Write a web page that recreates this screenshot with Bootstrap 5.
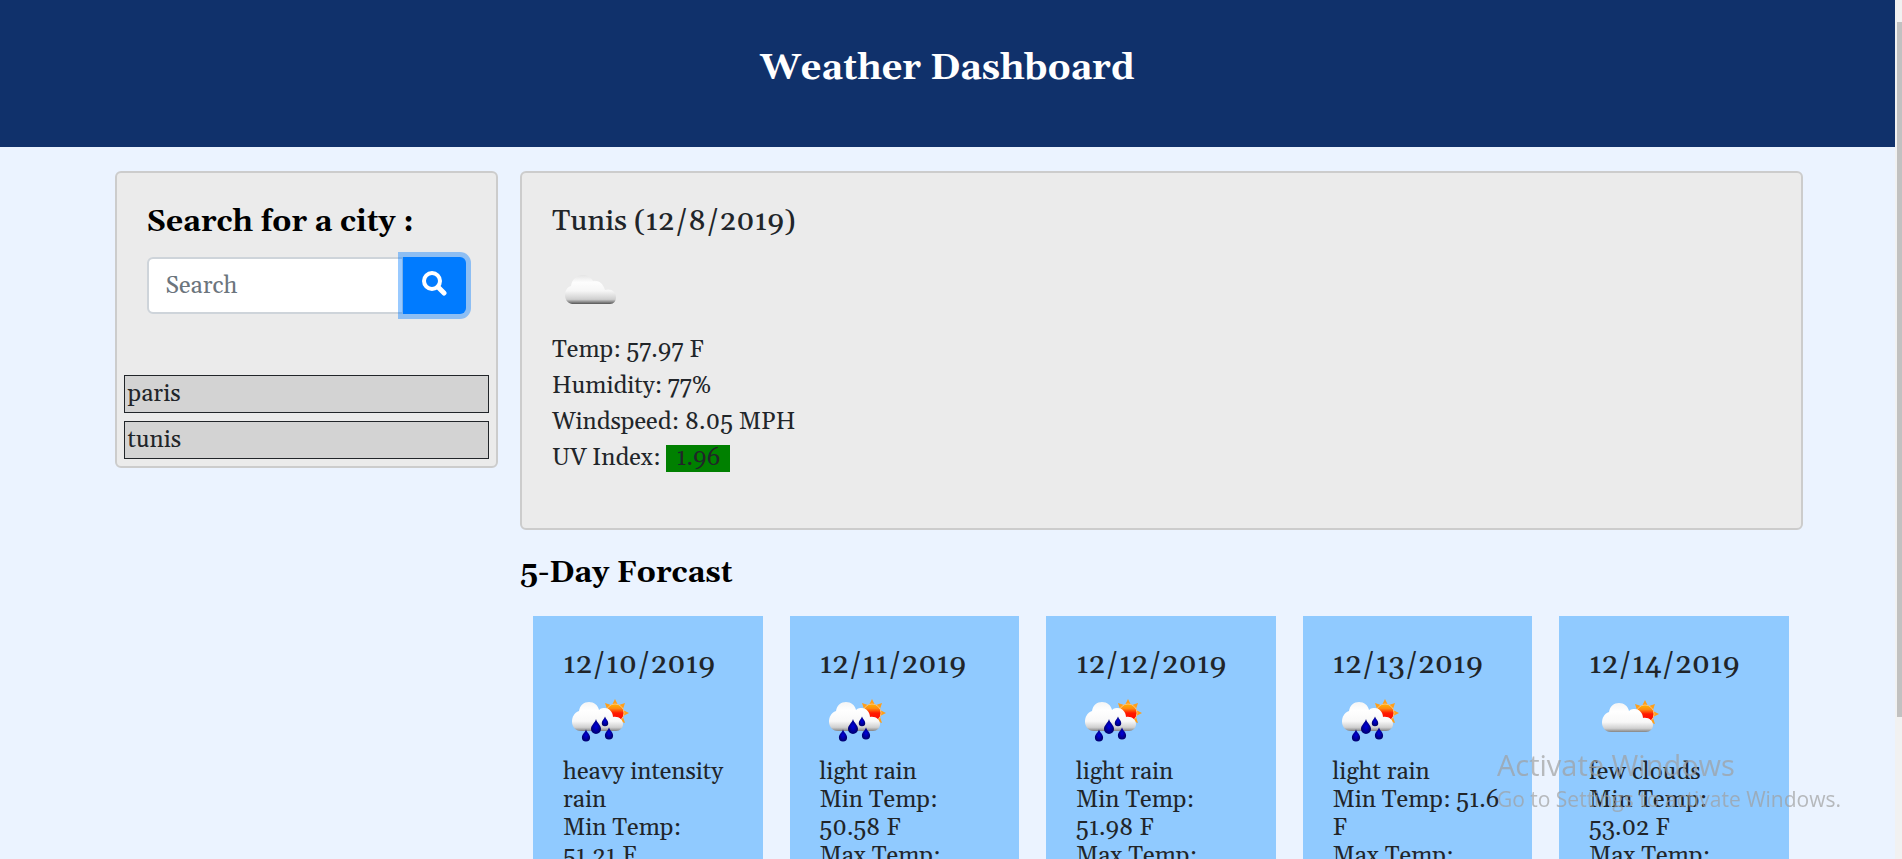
<!DOCTYPE html>
<html lang="en">
<head>
<meta charset="utf-8">
<meta name="viewport" content="width=device-width, initial-scale=1">
<title>Weather Dashboard</title>
<link rel="stylesheet" href="https://cdn.jsdelivr.net/npm/bootstrap@5.3.0/dist/css/bootstrap.min.css">
<style>
  html { scrollbar-width: none; }
  html::-webkit-scrollbar { display: none; }
  body { background: #ebf3ff; color: #212529; font-family: Georgia, Gelasio, "Liberation Serif", serif; font-size: 24px; line-height: 36px; padding-right: 7px; }
  .page-head { background: #10316b; color: #fff; padding: 46px 0 56px; margin-bottom: 24px; }
  .page-head h1 { font-size: 36px; line-height: 45px; }
  .dash { max-width: 1710px; }
  .side { padding: 0 22px; }
  .panel { background: #ebebeb; border: 2px solid #ccc; border-radius: 6px; }
  .panel-pad { padding: 30px; }
  .panel-pad-sm { padding: 7px; }
  .title { font-size: 29px; line-height: 38px; }
  .strong-title { color: #000; font-size: 30px; font-weight: 700; }
  .search { padding-bottom: 54px; }
  .search .form-control { font-family: inherit; font-size: 24px; line-height: 36px; border: 2px solid #ced4da; border-radius: 6px; padding: 9px 17px; height: 57px; }
  .search .form-control::placeholder { color: #6c757d; }
  .search .btn { background: #007bff; border-radius: 0 6px 6px 0; width: 63px; padding: 0 0 4px; border: 0; box-shadow: 0 0 0 5px rgba(0, 123, 255, .4); z-index: 6; }
  .past { background: #d3d3d3; border: 1px solid #212529; padding: 0 3px; color: inherit; text-align: left; border-radius: 0; }
  .uv { background: green; padding: 0 10px; line-height: 27px; }
  .wicon { width: 75px; height: 75px; display: block; }
  .now .wicon { margin: 10px 0 6px; }
  .now-tail { padding-bottom: 52px; }
  .day-col { padding: 0 14px 0 13px; }
  .day { background: #90caff; line-height: 28px; padding: 30px; }
  .day .title { line-height: 36px; padding-top: 1px; }
  .watermark { right: 61px; bottom: 44px; color: rgba(160, 160, 160, .7); font-family: "Open Sans", sans-serif; pointer-events: none; }
  .wm-big { font-size: 29px; line-height: 36px; }
  .wm-small { font-size: 21px; line-height: 32px; }
  .scroll-track { width: 7px; background: #f1f1f1; padding: 22px 0 0 2px; }
  .scroll-thumb { height: 83%; background: #c1c1c1; }
</style>
</head>
<body>
<svg width="0" height="0" class="position-absolute" aria-hidden="true">
  <defs>
    <linearGradient id="cloudFill" gradientUnits="userSpaceOnUse" x1="0" y1="18" x2="0" y2="49">
      <stop offset="0" stop-color="#f4f4f4"/><stop offset=".3" stop-color="#fff"/><stop offset=".65" stop-color="#f8f8f8"/><stop offset=".85" stop-color="#d0d0d0"/><stop offset="1" stop-color="#707070"/>
    </linearGradient>
    <linearGradient id="sunFill" x1="0" y1="0" x2="0" y2="1">
      <stop offset="0" stop-color="#ffb700"/><stop offset=".25" stop-color="#ff8a10"/><stop offset=".5" stop-color="#ff1a00"/><stop offset="1" stop-color="#f00"/>
    </linearGradient>
    <radialGradient id="dropFill"><stop offset="0" stop-color="#0000e0"/><stop offset="1" stop-color="#00006e"/></radialGradient>
    <g id="sun">
      <path fill="#ff9f1a" d="M0-14l3 6h-6zM14 0l-6 3v-6zM-14 0l6-3v6zM0 14l-3-6h6zM10-10l-2 6-4-4zM-10-10l6 2-4 4zM10 10l-6-2 4-4z"/>
      <circle r="9" fill="url(#sunFill)" stroke="#ffc27a" stroke-width="1"/>
    </g>
    <path id="cloudShape" d="M18 48C12 48 9 43 9 39C9 34 11 30 16 28C17 22 21 19 26 19C31 19 35 22 36 27C38 25 40 25 42 25C46 25 50 29 50 34C56 33 60 37 60 41C60 45 57 48 53 48Z"/>
    <path id="drop" d="M0-7C1-3 5-1 5 3A5 5 0 0 1-5 3C-5-1-1-3 0-7Z" fill="url(#dropFill)"/>
    <symbol id="rain" viewBox="0 0 75 75">
      <use href="#sun" x="52" y="30"/>
      <use href="#cloudShape" fill="url(#cloudFill)"/>
      <use href="#drop" transform="translate(33 43)"/>
      <use href="#drop" transform="translate(42 38) scale(.65)"/>
      <use href="#drop" transform="translate(23 52) scale(.82)"/>
      <use href="#drop" transform="translate(46 50) scale(.82)"/>
    </symbol>
    <symbol id="fewClouds" viewBox="-4 -1 75 75">
      <use href="#sun" x="52" y="30"/>
      <use href="#cloudShape" fill="url(#cloudFill)"/>
    </symbol>
    <linearGradient id="greyFill" x1="0" y1="0" x2="0" y2="1">
      <stop offset="0" stop-color="#e4e4e4"/><stop offset=".25" stop-color="#fdfdfd"/><stop offset=".55" stop-color="#f6f6f6"/><stop offset=".84" stop-color="#cfcfcf"/><stop offset="1" stop-color="#555"/>
    </linearGradient>
    <symbol id="cloudy" viewBox="0 0 75 75">
      <path fill="url(#greyFill)" d="M20 53C15 52 13 48 13 44C13 40 15 36 19 35C20 28 25 24 31 24C35 24 39 26 41 30C46 29 51 32 53 39C59 37 64 41 64 46C64 50 62 53 58 53Z"/>
    </symbol>
  </defs>
</svg>

<header class="page-head text-center"><h1 class="fw-bold m-0">Weather Dashboard</h1></header>

<main class="dash mx-auto">
  <div class="row g-0 align-items-start">
    <div class="col-3 side">
      <div class="panel">
        <form class="panel-pad search">
          <label class="title strong-title d-block" for="city">Search for a city :</label>
          <div class="input-group flex-nowrap mt-3">
            <input class="form-control" id="city" type="text" placeholder="Search">
            <button class="btn" type="button" aria-label="Search">
              <svg width="25" height="25" viewBox="0 0 25 25" fill="none" stroke="#fff" aria-hidden="true"><circle cx="10" cy="10" r="8" stroke-width="4"/><path d="M16 16l6 6" stroke-width="5" stroke-linecap="round"/></svg>
            </button>
          </div>
        </form>
        <div class="panel-pad-sm d-grid gap-2">
          <button type="button" class="past">paris</button>
          <button type="button" class="past">tunis</button>
        </div>
      </div>
    </div>
    <div class="col-9">
      <section class="panel panel-pad now now-tail">
        <h2 class="title m-0">Tunis (12/8/2019)</h2>
        <svg class="wicon" role="img" aria-label="Cloudy"><use href="#cloudy"/></svg>
        <div>Temp: 57.97 F</div>
        <div>Humidity: 77%</div>
        <div>Windspeed: 8.05 MPH</div>
        <div>UV Index: <span class="uv d-inline-block">1.96</span></div>
      </section>
      <h2 class="title strong-title my-4">5-Day Forcast</h2>
      <div class="row row-cols-5 g-0">
        <div class="day-col"><article class="day h-100"><h3 class="title m-0">12/10/2019</h3><svg class="wicon" role="img" aria-label="Rain"><use href="#rain"/></svg>heavy intensity rain<br>Min Temp: 51.21 F<br>Max Temp: 55.4 F</article></div>
        <div class="day-col"><article class="day h-100"><h3 class="title m-0">12/11/2019</h3><svg class="wicon" role="img" aria-label="Rain"><use href="#rain"/></svg>light rain<br>Min Temp: 50.58 F<br>Max Temp: 55.4 F</article></div>
        <div class="day-col"><article class="day h-100"><h3 class="title m-0">12/12/2019</h3><svg class="wicon" role="img" aria-label="Rain"><use href="#rain"/></svg>light rain<br>Min Temp: 51.98 F<br>Max Temp: 55.4 F</article></div>
        <div class="day-col"><article class="day h-100"><h3 class="title m-0">12/13/2019</h3><svg class="wicon" role="img" aria-label="Rain"><use href="#rain"/></svg>light rain<br>Min Temp: 51.6 F<br>Max Temp: 55.4 F</article></div>
        <div class="day-col"><article class="day h-100"><h3 class="title m-0">12/14/2019</h3><svg class="wicon" role="img" aria-label="Few clouds"><use href="#fewClouds"/></svg>few clouds<br>Min Temp: 53.02 F<br>Max Temp: 55.4 F</article></div>
      </div>
    </div>
  </div>
</main>

<div class="watermark position-fixed">
  <div class="wm-big">Activate Windows</div>
  <div class="wm-small">Go to Settings to activate Windows.</div>
</div>
<div class="scroll-track position-fixed top-0 end-0 h-100" aria-hidden="true"><div class="scroll-thumb"></div></div>
<script src="https://cdn.jsdelivr.net/npm/bootstrap@5.3.0/dist/js/bootstrap.bundle.min.js"></script>
</body>
</html>
